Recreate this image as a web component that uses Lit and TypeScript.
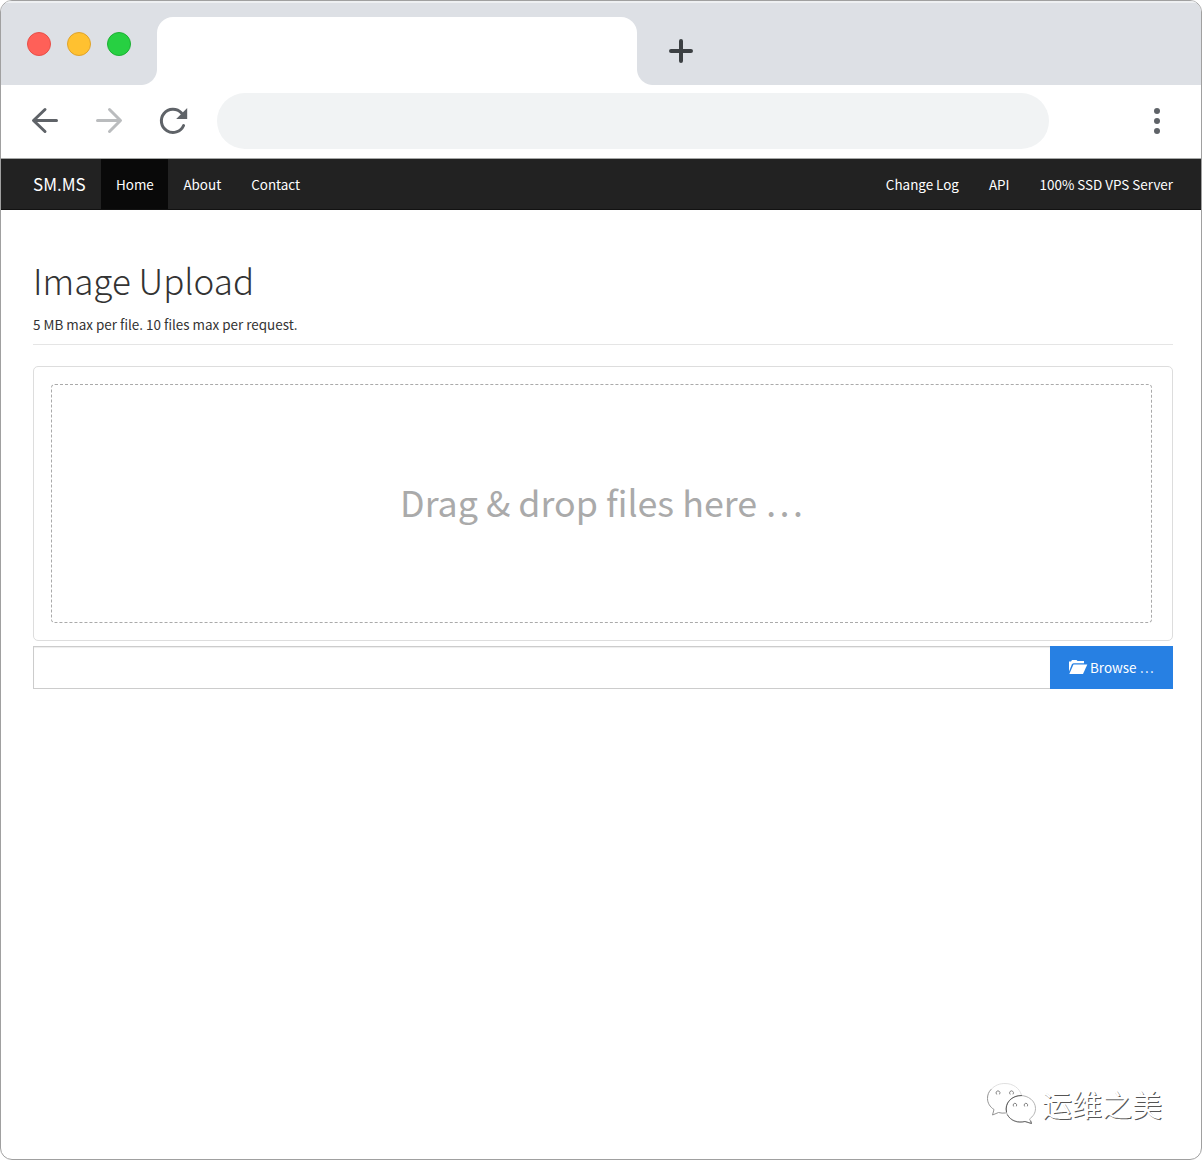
import { LitElement, html, css } from "lit";
import { customElement } from "lit/decorators.js";

const NAV_LEFT = ["Home", "About", "Contact"];
const NAV_RIGHT = ["Change Log", "API", "100% SSD VPS Server"];

@customElement("browser-chrome")
class BrowserChrome extends LitElement {
  static styles = css`
    :host { display: block; flex: none; }
    .tabs { display: flex; height: 84px; box-sizing: border-box; background: #dde0e5; border-top: 2px solid #eef0f2; }
    .lights { display: flex; gap: 16px; width: 130px; padding: 29px 0 0 26px; }
    .light { width: 24px; height: 24px; border-radius: 50%; box-sizing: border-box; }
    .red { background: #ff6058; border: 1px solid #e84f48; }
    .yellow { background: #ffc130; border: 1px solid #dfa32c; }
    .green { background: #27d042; border: 1px solid #1db034; }
    .tab { position: relative; width: 480px; margin-top: 14px; background: #fff; border-radius: 16px 16px 0 0; }
    .tab::before, .tab::after { content: ""; position: absolute; bottom: 0; width: 16px; height: 16px; }
    .tab::before { left: -16px; background: radial-gradient(circle at 0 0, transparent 15.5px, #fff 16.5px); }
    .tab::after { right: -16px; background: radial-gradient(circle at 100% 0, transparent 15.5px, #fff 16.5px); }
    .plus { margin: 36px 0 0 32px; width: 24px; height: 24px; }
    .bar { display: flex; align-items: flex-start; height: 73px; background: #fff; border-bottom: 1px solid #a5a7a6; }
    .icons { width: 216px; height: 73px; }
    .address { width: 832px; height: 56px; margin-top: 8px; border-radius: 28px; background: #f1f3f4; }
    .menu { width: 10px; height: 28px; margin: 22px 0 0 103px; }
  `;
  render() {
    return html`
      <div class="tabs">
        <div class="lights">
          <div class="light red"></div><div class="light yellow"></div><div class="light green"></div>
        </div>
        <div class="tab"></div>
        <svg class="plus" viewBox="0 0 24 24"><path d="M12 2v20M2 12h20" stroke="#3c4043" stroke-width="4" stroke-linecap="round"/></svg>
      </div>
      <div class="bar">
        <svg class="icons" viewBox="1 85 216 73" fill="none" stroke-width="3" stroke-linecap="round" stroke-linejoin="round">
          <path d="M56.5 120.5H34M45 109.500L33.500 120.500L45 131.500" stroke="#5f6368"/>
          <path d="M97.500 120.500H120M109.500 109.500L120.500 120.500L109.500 131.500" stroke="#babcbe"/>
          <path d="M183.600 125.500A11.600 11.600 0 1 1 181.500 113" stroke="#5f6368"/>
          <path d="M187.200 108V119H176.200Z" fill="#5f6368"/>
        </svg>
        <div class="address"></div>
        <svg class="menu" viewBox="0 0 10 28" fill="#5f6368"><circle cx="5" cy="4" r="3"/><circle cx="5" cy="14" r="3"/><circle cx="5" cy="24" r="3"/></svg>
      </div>`;
  }
}

@customElement("site-nav")
class SiteNav extends LitElement {
  static styles = css`
    :host { display: block; flex: none; }
    .nav { display: flex; height: 51px; box-sizing: border-box; padding: 0 13px 0 17px; background: #222; border-bottom: 1px solid #121212; color: #fff; font-size: 13.43px; }
    .brand { width: 83px; box-sizing: border-box; padding-left: 15px; font-size: 17px; line-height: 50px; }
    .link { padding: 0 15px; line-height: 50px; white-space: nowrap; }
    .active { width: 67px; box-sizing: border-box; margin-right: .4px; background: #090909; }
    .spacer { flex: 1; }
  `;
  render() {
    return html`<nav class="nav">
      <div class="brand">SM.MS</div>
      ${NAV_LEFT.map((t, i) => html`<div class="link ${i === 0 ? "active" : ""}">${t}</div>`)}
      <div class="spacer"></div>
      ${NAV_RIGHT.map((t) => html`<div class="link">${t}</div>`)}
    </nav>`;
  }
}

@customElement("upload-panel")
class UploadPanel extends LitElement {
  static styles = css`
    :host { display: block; padding: 0 28px 0 32px; color: #333; }
    .title { margin: 48px 0 2px; height: 44px; line-height: 44px; font-size: 35px; font-weight: 300; white-space: nowrap; }
    .note { margin: 0; padding: 10px 0 9px; line-height: 21px; font-size: 13.44px; border-bottom: 1px solid #e5e5e5; }
    .preview { margin-top: 21px; height: 275px; box-sizing: border-box; border: 1px solid #ddd; border-radius: 5px; padding: 17px 20px 17px 17px; }
    .zone { height: 239px; box-sizing: border-box; padding-bottom: 6px; border: 1px dashed #aaa; border-radius: 4px; display: flex; align-items: center; justify-content: center; color: #aaa; font-size: 35.8px; }
    .picker { display: flex; margin-top: 5px; height: 43px; }
    .field { flex: 1; box-sizing: border-box; border: 1px solid #ccc; border-right: 0; box-shadow: inset 0 1px 1px rgba(0,0,0,.075); }
    .browse { width: 123px; box-sizing: border-box; padding: 0 0 2px 18px; display: flex; align-items: center; background: #2780e3; color: #fff; font-size: 13.43px; white-space: nowrap; }
    .folder { width: 20px; height: 16px; margin-right: 2px; }
  `;
  render() {
    return html`
      <h1 class="title">Image Upload</h1>
      <p class="note">5 MB max per file. 10 files max per request.</p>
      <div class="preview"><div class="zone">Drag &amp; drop files here …</div></div>
      <div class="picker">
        <div class="field"></div>
        <div class="browse">
          <svg class="folder" viewBox="0 0 20 16" fill="#fff"><path d="M1 12.500V2.500H3L4 1H8.500L9.500 2H16V4.300H5.500L4 5Z"/><path d="M5.500 5.500H19.300L15 15H1.300Z"/></svg>
          <span>Browse …</span>
        </div>
      </div>`;
  }
}

@customElement("wechat-mark")
class WechatMark extends LitElement {
  static styles = css`
    :host { display: flex; align-items: flex-start; }
    .logo { width: 52px; height: 46px; margin-right: 4px; }
    .name { font-size: 30px; line-height: 44px; color: #fff; text-shadow: 1px 1px 0 #555; white-space: nowrap; }
  `;
  render() {
    return html`
      <svg class="logo" viewBox="0 0 52 46" fill="none" stroke-width=".9" stroke-linecap="round">
        <path d="M5 8.500C9 4 14 2.500 19 2.500C27 2.500 33.500 7 35.500 14" stroke="#ddd"/>
        <path d="M5 8.500C2.500 11 1.500 14 1.500 17.500C1.500 22 4 26 8 28.500L6.500 34L12.500 31.500Q16 32.500 19.500 32" stroke="#888"/>
        <path d="M34.500 14.500C42.500 14.500 49.500 20 49.500 27.500C49.500 32 47 35.500 43.500 38L45.500 42.500L39 40.500C29 43.500 20 37 20 28C20 20.500 26.500 14.500 34.500 14.500Z" stroke="#aaa" fill="#fff"/>
        <path d="M20.500 31C18.500 22 25.500 14.500 35.500 14.500" stroke="#555"/>
        <path d="M21.500 34C25 40 32 42 39 40.500L45.500 42.500L44.800 40" stroke="#666"/>
        <g stroke="#777"><path d="M10.500 13.200A2 2 0 1 1 13.700 13"/><path d="M24 13.200A2 2 0 1 1 27.200 13"/><path d="M27.500 25.200A1.800 1.800 0 1 1 30.500 25"/><path d="M38.500 25.200A1.800 1.800 0 1 1 41.500 25"/></g>
      </svg>
      <span class="name">运维之美</span>`;
  }
}

@customElement("app-root")
class AppRoot extends LitElement {
  static styles = css`
    :host { display: block; font-family: "Noto Sans CJK SC", sans-serif; }
    .window { display: flex; flex-direction: column; width: 1202px; height: 1160px; box-sizing: border-box; border: 1px solid #a0a0a0; border-radius: 12px; overflow: hidden; background: #fff; }
    .foot { display: flex; justify-content: flex-end; margin-top: auto; padding: 0 39px 32px 0; }
  `;
  render() {
    return html`<div class="window">
      <browser-chrome></browser-chrome>
      <site-nav></site-nav>
      <upload-panel></upload-panel>
      <div class="foot"><wechat-mark></wechat-mark></div>
    </div>`;
  }
}
